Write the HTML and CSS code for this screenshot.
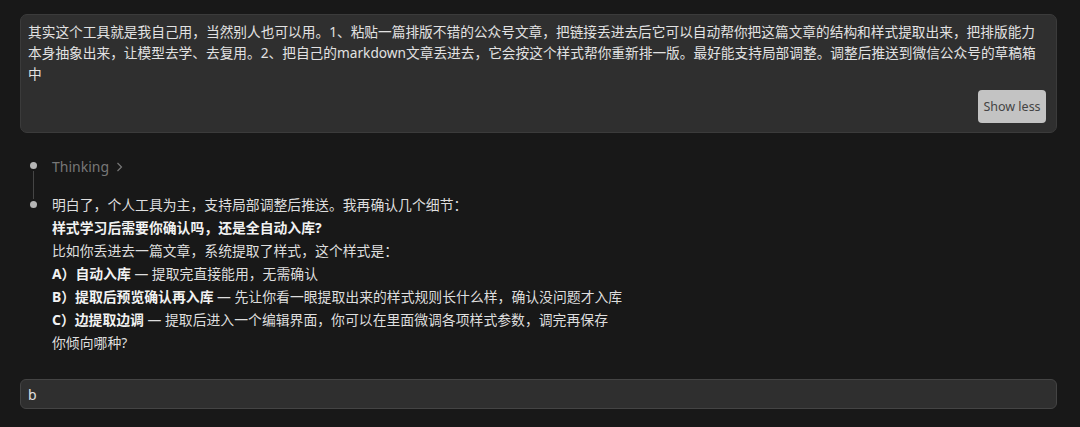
FILE: index.html
```html
<!DOCTYPE html>
<html lang="zh">
<head>
  <meta charset="UTF-8" />
  <title>对话</title>
  <link rel="stylesheet" href="styles.css">
</head>
<body>

  <!-- 用户消息 -->
  <div class="prompt">
    <p class="prompt-text">其实这个工具就是我自己用，当然别人也可以用。1、粘贴一篇排版不错的公众号文章，把链接丢进去后它可以自动帮你把这篇文章的结构和样式提取出来，把排版能力<br>本身抽象出来，让模型去学、去复用。2、把自己的markdown文章丢进去，它会按这个样式帮你重新排一版。最好能支持局部调整。调整后推送到微信公众号的草稿箱<br>中</p>
    <div class="prompt-actions">
      <button class="btn-less">Show less</button>
    </div>
  </div>

  <!-- 回复 -->
  <div class="steps">
    <div class="step step-thinking">
      <div class="marker">
        <span class="dot"></span>
        <span class="stem"></span>
      </div>
      <div class="thinking">
        Thinking
        <svg width="7" height="10" viewBox="0 0 7 10"><path d="M1.5 1 L5.5 5 L1.5 9" fill="none" stroke="#777" stroke-width="1.2"/></svg>
      </div>
    </div>
    <div class="step">
      <div class="marker">
        <span class="stem-top"></span>
        <span class="dot"></span>
      </div>
      <div class="answer">
        <p>明白了，个人工具为主，支持局部调整后推送。我再确认几个细节：</p>
        <p><b>样式学习后需要你确认吗，还是全自动入库?</b></p>
        <p>比如你丢进去一篇文章，系统提取了样式，这个样式是：</p>
        <p><b>A）自动入库</b> — 提取完直接能用，无需确认</p>
        <p><b>B）提取后预览确认再入库</b> — 先让你看一眼提取出来的样式规则长什么样，确认没问题才入库</p>
        <p><b>C）边提取边调</b> — 提取后进入一个编辑界面，你可以在里面微调各项样式参数，调完再保存</p>
        <p>你倾向哪种?</p>
      </div>
    </div>
  </div>

  <input class="composer" type="text" value="b" />

</body>
</html>
```

FILE: styles.css
```css
body {
  margin: 0;
  padding: 14px 23px 18px 20px;
  background: #181818;
  color: #dedede;
  font-family: "Noto Sans", "Noto Sans CJK SC", sans-serif;
  font-size: 13.7px;
}
.prompt {
  background: #2f2f2f;
  border: 1px solid #3b3b3b;
  border-radius: 7px;
  padding: 6px 10px 9px 7px;
}
.prompt-text {
  margin: 0;
  line-height: 21px;
  color: #e2e2e2;
}
.prompt-actions {
  display: flex;
  justify-content: flex-end;
  margin-top: 6px;
}
.btn-less {
  width: 68px;
  height: 33px;
  padding: 0;
  border: none;
  border-radius: 4px;
  background: #c3c3c3;
  color: #444;
  font-family: "Noto Sans", sans-serif;
  font-size: 12.5px;
  cursor: pointer;
}
.steps {
  margin-top: 23px;
}
.step {
  display: flex;
  gap: 6px;
}
.marker {
  width: 26px;
  display: flex;
  flex-direction: column;
  align-items: center;
}
.dot {
  width: 7px;
  height: 7px;
  border-radius: 50%;
  background: #b5b5b5;
  flex: none;
}
.step-thinking .dot {
  margin-top: 6px;
}
.stem {
  flex: 1;
  width: 1px;
  background: #454545;
  margin-top: 2px;
}
.stem-top {
  width: 1px;
  height: 6px;
  margin-bottom: 2px;
  background: #454545;
}
.thinking {
  line-height: 22px;
  padding-bottom: 15px;
  color: #777;
  font-size: 14px;
  display: flex;
  align-items: center;
  gap: 7px;
}
.answer {
  font-size: 13.85px;
}
.answer p {
  margin: 0;
  line-height: 23px;
}
.answer b {
  color: #f2f2f2;
  font-weight: bold;
}
.composer {
  display: block;
  width: 100%;
  box-sizing: border-box;
  height: 30px;
  margin-top: 25px;
  padding: 0 7px;
  background: #2f2f2f;
  border: 1px solid #444;
  border-radius: 6px;
  color: #e0e0e0;
  font-family: "Noto Sans", "Noto Sans CJK SC", sans-serif;
  font-size: 14px;
  outline: none;
}
```
